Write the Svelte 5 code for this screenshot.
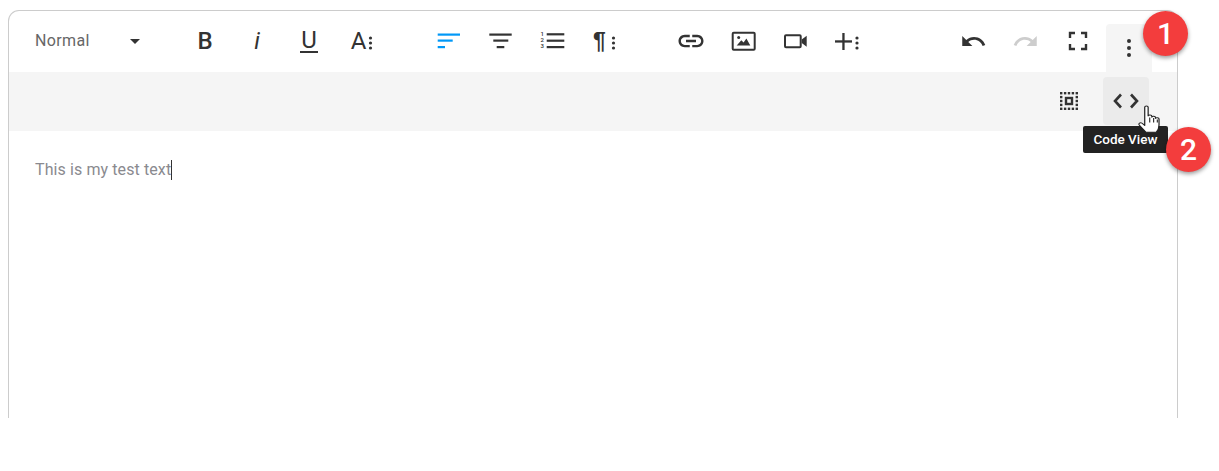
<script>
  const alignRows = [4.5, 10.5, 17];
  const moreDots = [9, 14, 19];
  // dotted frame of the select-all icon: 5 squares per side
  const grid = [0, 1, 2, 3, 4];
  const frame = grid
    .flatMap((row) => grid.map((col) => [row, col]))
    .filter(([row, col]) => row === 0 || row === 4 || col === 0 || col === 4);
</script>

{#snippet dots(x)}
  {#each moreDots as y}
    <circle cx={x} cy={y} r="1.6" />
  {/each}
{/snippet}

<div class="editor">
  <div class="toolbar">
    <div class="group first">
      <button class="select">
        <span class="select-label">Normal</span>
        <span class="caret-down"></span>
      </button>
      <button class="btn"><span class="glyph bold">B</span></button>
      <button class="btn"><span class="glyph italic">i</span></button>
      <button class="btn"><span class="glyph under">U</span></button>
      <button class="btn">
        <span class="glyph size">A</span>
        <svg class="side" viewBox="0 0 6 24">{@render dots(2.5)}</svg>
      </button>
    </div>

    <div class="group second">
      <button class="btn">
        <svg viewBox="0 0 24 24" class="active">
          <rect x="0.7" y={alignRows[0]} width="22.3" height="2.2" />
          <rect x="0.7" y={alignRows[1]} width="15" height="2.2" />
          <rect x="0.7" y={alignRows[2]} width="7.3" height="2.2" />
        </svg>
      </button>
      <button class="btn">
        <svg viewBox="0 0 24 24">
          <rect x="0.3" y={alignRows[0]} width="22.4" height="2.2" />
          <rect x="4.3" y={alignRows[1]} width="15" height="2.2" />
          <rect x="7.7" y={alignRows[2]} width="7.6" height="2.2" />
        </svg>
      </button>
      <button class="btn">
        <svg viewBox="0 0 24 24">
          <text class="nums" x="-0.4" y="6.5">1</text>
          <text class="nums" x="-0.4" y="12.8">2</text>
          <text class="nums" x="-0.4" y="19.2">3</text>
          <rect x="5.7" y="4.2" width="17.6" height="2.2" />
          <rect x="5.7" y="10.6" width="17.6" height="2.2" />
          <rect x="5.7" y="17" width="17.6" height="2.2" />
        </svg>
      </button>
      <button class="btn">
        <span class="glyph para">¶</span>
        <svg class="side para-dots" viewBox="0 0 6 24">{@render dots(2.5)}</svg>
      </button>
    </div>

    <div class="group">
      <button class="btn">
        <svg viewBox="0 0 24 24" class="wide">
          <path d="M3.9 12c0-1.71 1.39-3.1 3.1-3.1h4V7H7c-2.76 0-5 2.24-5 5s2.24 5 5 5h4v-1.9H7c-1.71 0-3.1-1.39-3.1-3.1zM8 13h8v-2H8v2zm9-6h-4v1.9h4c1.71 0 3.1 1.39 3.1 3.1s-1.39 3.1-3.1 3.1h-4V17h4c2.76 0 5-2.24 5-5s-2.24-5-5-5z" />
        </svg>
      </button>
      <button class="btn">
        <svg viewBox="0 0 24 24">
          <rect class="outline" x="1.7" y="3.7" width="22" height="17" rx="1" />
          <circle cx="7.7" cy="8.5" r="1.5" />
          <path d="M5.7 16.5 L10.3 11.2 L12.6 13.6 L15.4 9.5 L19.3 16.5 Z" />
        </svg>
      </button>
      <button class="btn">
        <svg viewBox="0 0 24 24">
          <rect class="outline" x="2" y="6.3" width="15.7" height="12" rx="1" />
          <path d="M18.7 10.5 L23.7 6.8 V17.8 L18.7 14 Z" />
        </svg>
      </button>
      <button class="btn">
        <svg viewBox="0 0 24 24">
          <rect x="0" y="11.3" width="17" height="2.3" />
          <rect x="7.3" y="4" width="2.3" height="17" />
          {@render dots(22)}
        </svg>
      </button>
    </div>

    <div class="group end">
      <button class="btn">
        <svg viewBox="0 0 24 24" class="wide-s">
          <path d="M12.5 8c-2.65 0-5.05.99-6.9 2.6L2 7v9h9l-3.62-3.62c1.39-1.16 3.16-1.88 5.12-1.88 3.54 0 6.55 2.31 7.6 5.5l2.37-.78C21.08 11.03 17.15 8 12.5 8z" />
        </svg>
      </button>
      <button class="btn">
        <svg viewBox="0 0 24 24" class="wide-s off">
          <path d="M18.4 10.6C16.55 8.99 14.15 8 11.5 8c-4.65 0-8.58 3.03-9.96 7.22L3.9 16c1.05-3.19 4.05-5.5 7.6-5.5 1.95 0 3.73.72 5.12 1.88L13 16h9V7l-3.6 3.6z" />
        </svg>
      </button>
      <button class="btn">
        <svg viewBox="0 0 24 24">
          <path class="line" d="M5 9V4h5M16 4h5v5M21 15v5h-5M10 20H5v-5" />
        </svg>
      </button>
      <button class="btn more">
        <svg viewBox="0 0 24 24">
          <circle cx="12" cy="5" r="2" />
          <circle cx="12" cy="12" r="2" />
          <circle cx="12" cy="19" r="2" />
        </svg>
      </button>
    </div>
  </div>

  <div class="subbar">
    <button class="btn">
      <svg viewBox="0 0 24 24">
        {#each frame as [row, col]}
          <rect x={3 + col * 3.9} y={3 + row * 3.9} width="2.4" height="2.4" />
        {/each}
        <rect class="outline thin" x="9" y="9" width="6" height="6" />
      </svg>
    </button>
    <button class="btn hover">
      <svg viewBox="0 0 24 24">
        <path class="line round" d="M7 5.5 1 12l6 6.5M17 5.5 23 12l-6 6.5" />
      </svg>
    </button>
  </div>

  <div class="content">
    <p>This is my test text<span class="text-caret"></span></p>
  </div>

  <div class="tooltip">Code View</div>

  <svg class="hand" viewBox="1 0 18 30" preserveAspectRatio="none">
    <path d="M6.5 2.2c0-1.6 2.8-1.6 2.8 0v9.2c.2-1.5 3-1.5 3 .2v1c.3-1.4 3-1.3 3 .3v1c.4-1.2 2.9-1 2.9.6v6.2c0 3.6-1.7 6.8-2.3 7.6H7.5c-1.4-2-3-4-5.5-7.6-1-1.6.9-3.2 2.3-1.8l2.2 2.2z" />
    <path class="finger" d="M10.6 13v5M13.8 13.5v4.5M16.8 15v3" />
  </svg>

  <div class="badge one">1</div>
  <div class="badge two">2</div>
</div>

<style>
  :global(body) {
    margin: 0;
    background: #fff;
  }

  .editor {
    position: relative;
    box-sizing: border-box;
    width: 1170px;
    height: 408px;
    margin: 10px 0 0 8px;
    border: 1px solid #ccc;
    border-bottom: none;
    border-radius: 11px 11px 0 0;
    font-family: Roboto, "Liberation Sans", sans-serif;
    color: #333;
  }

  .toolbar {
    display: flex;
    align-items: flex-start;
    height: 61px;
    padding: 6px 22px 0 21px;
    box-sizing: border-box;
  }

  .group {
    display: flex;
    margin-right: 36px;
  }

  .group.second {
    margin-right: 34px;
  }

  .group.end {
    margin-left: auto;
    margin-right: 0;
  }

  button {
    border: none;
    background: none;
    padding: 0;
    margin: 0;
    font: inherit;
    color: inherit;
  }

  .btn {
    position: relative;
    display: flex;
    align-items: center;
    justify-content: center;
    width: 46px;
    height: 48px;
    margin: 0 3px;
    border-radius: 4px;
  }

  .btn svg {
    width: 24px;
    height: 24px;
    fill: #333;
    overflow: visible;
    flex: none;
  }

  .btn svg.active {
    fill: #0098f7;
  }

  .btn svg.wide {
    width: 30px;
    height: 30px;
  }

  .btn svg.wide-s {
    width: 27px;
    height: 27px;
  }

  .btn svg.off {
    fill: #cdcdcd;
  }

  .btn svg.side {
    position: absolute;
    left: 30px;
    top: 12px;
    width: 6px;
  }

  .btn svg.para-dots {
    left: 29px;
  }

  .select {
    display: flex;
    align-items: center;
    justify-content: space-between;
    box-sizing: border-box;
    width: 146px;
    height: 48px;
    padding: 0 36px 0 5px;
    margin-right: 3px;
    margin-top: -1px;
  }

  .select-label {
    font-size: 16px;
    letter-spacing: 0.35px;
    color: #666;
  }

  .caret-down {
    width: 0;
    height: 0;
    margin-top: 2px;
    border-left: 5px solid transparent;
    border-right: 5px solid transparent;
    border-top: 5px solid #333;
  }

  .glyph {
    font-size: 22px;
    line-height: 1;
    color: #333;
  }

  .bold {
    font-weight: 500;
    font-size: 24px;
  }

  .italic {
    font-style: italic;
    font-weight: 400;
    font-size: 24px;
  }

  .under {
    font-size: 24px;
    line-height: 21px;
    border-bottom: 2px solid #333;
    padding: 0 1px;
    margin-top: 1px;
  }

  .size {
    font-size: 24px;
    margin-right: 5px;
  }

  .para {
    font-family: "Liberation Sans", sans-serif;
    font-weight: 700;
    font-size: 23px;
    margin-right: 11px;
  }

  .nums {
    font-family: Roboto, sans-serif;
    font-size: 6px;
    font-weight: 500;
  }

  .outline {
    fill: none;
    stroke: #333;
    stroke-width: 2;
  }

  .outline.thin {
    stroke-width: 2.4;
  }

  .line {
    fill: none;
    stroke: #333;
    stroke-width: 2.4;
  }

  .line.round {
    stroke-width: 2.6;
  }

  .btn.more {
    margin-top: 7px;
    background: #f5f5f5;
    border-radius: 4px 4px 0 0;
  }

  .subbar {
    display: flex;
    justify-content: flex-end;
    align-items: flex-start;
    gap: 5px;
    height: 59px;
    padding: 5px 25px 0 0;
    box-sizing: border-box;
    background: #f5f5f5;
  }

  .btn.hover {
    background: #ebebeb;
  }

  .content {
    padding: 28px 26px;
  }

  .content p {
    margin: 0;
    font-size: 16px;
    letter-spacing: 0.1px;
    line-height: 22px;
    color: #8a8a8f;
  }

  .text-caret {
    display: inline-block;
    width: 1px;
    height: 20px;
    vertical-align: -5px;
    background: #333;
  }

  .tooltip {
    position: absolute;
    left: 1074px;
    top: 115px;
    box-sizing: border-box;
    width: 85px;
    height: 27px;
    border-radius: 2px;
    background: #222;
    color: #fff;
    font-size: 13.5px;
    font-weight: 500;
    line-height: 27px;
    text-align: center;
  }

  .hand {
    position: absolute;
    left: 1129px;
    top: 94px;
    width: 22px;
    height: 29px;
    overflow: visible;
  }

  .hand path {
    fill: #fff;
    stroke: #222;
    stroke-width: 1;
    stroke-linejoin: round;
  }

  .hand path.finger {
    fill: none;
    stroke-width: 0.9;
  }

  .badge {
    position: absolute;
    width: 45px;
    height: 45px;
    border-radius: 50%;
    background: #f33d3d;
    color: #fff;
    font-size: 30px;
    font-weight: 500;
    line-height: 45px;
    text-align: center;
    box-shadow: 0 2px 4px rgba(0, 0, 0, 0.4);
  }

  .badge.one {
    left: 1134px;
    top: 0;
  }

  .badge.two {
    left: 1157px;
    top: 116px;
  }
</style>
